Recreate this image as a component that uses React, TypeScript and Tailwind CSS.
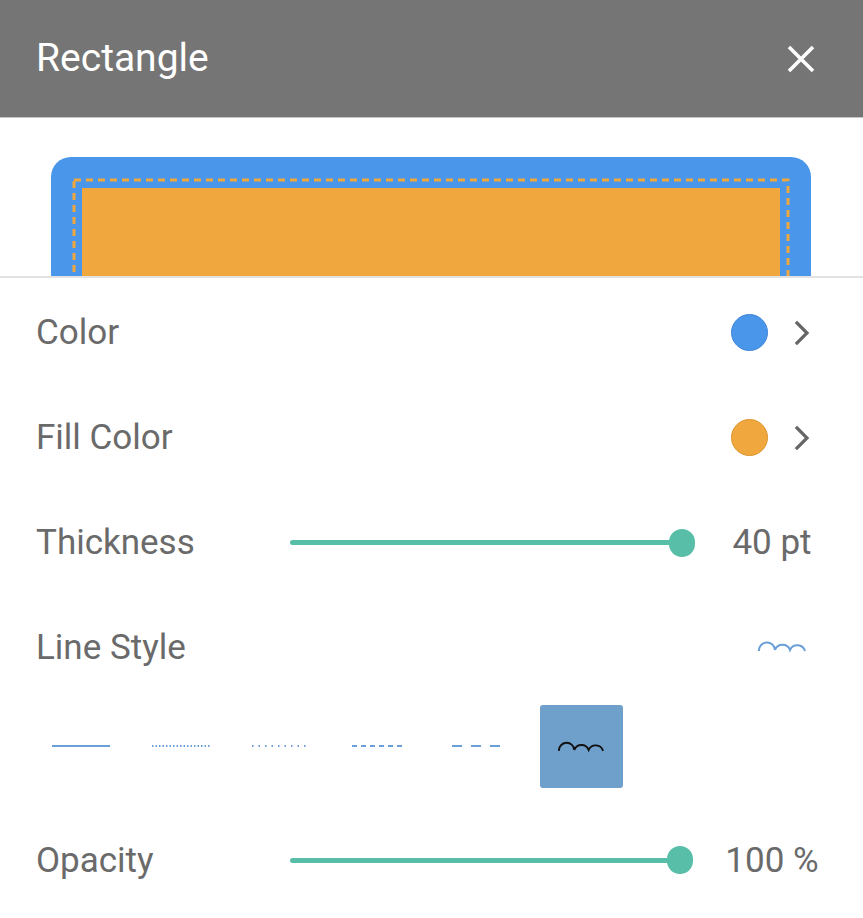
import React from "react";

const teal = "#59bea7";

function Chevron() {
  return (
    <svg width="16" height="26" viewBox="0 0 16 26" fill="none">
      <path d="M3 3l10 10-10 10" stroke="#666666" strokeWidth="3.2" strokeLinecap="square" />
    </svg>
  );
}

function Wave({ color, width = 48 }: { color: string; width?: number }) {
  return (
    <svg width={width} height="14" viewBox="0 0 48 14" fill="none">
      <path
        d="M1 10 A8 8 0 0 1 17 9 A8 8 0 0 1 32 9 A8 8 0 0 1 47 10"
        stroke={color}
        strokeWidth="2"
      />
    </svg>
  );
}

function Slider({ width }: { width: number }) {
  return (
    <div className="relative flex h-[28px] items-center" style={{ width }}>
      <div className="h-[5px] w-full rounded-full" style={{ backgroundColor: teal }} />
      <div
        className="absolute right-[-13px] top-0 h-[28px] w-[26px] rounded-full"
        style={{ backgroundColor: teal }}
      />
    </div>
  );
}

function LineSample({ dash, thick = 2, w = 58 }: { dash?: string; thick?: number; w?: number }) {
  return (
    <svg width={w} height="6" viewBox={`0 0 ${w} 6`}>
      <line x1="0" y1="3" x2={w} y2="3" stroke="#6a9fd8" strokeWidth={thick} strokeDasharray={dash} />
    </svg>
  );
}

export default function App() {
  const label = "text-[35px] text-[#6a6a6a] leading-none";

  return (
    <div
      className="h-[918px] w-[863px] overflow-hidden bg-white"
      style={{ fontFamily: "Roboto, 'Noto Sans', sans-serif" }}
    >
      {/* header */}
      <div className="flex h-[118px] items-center justify-between border-b border-[#c4c4c4] bg-[#757575] pl-9 pr-[48px]">
        <span className="text-[39px] leading-none text-white">Rectangle</span>
        <svg width="28" height="28" viewBox="0 0 28 28">
          <path d="M2 2l24 24M26 2L2 26" stroke="white" strokeWidth="3.6" />
        </svg>
      </div>

      {/* preview */}
      <div className="h-[158px] overflow-hidden">
        <svg width="863" height="158" viewBox="0 0 863 158">
          <rect x="51" y="39" width="760" height="220" rx="20" fill="#4a96ea" />
          <rect
            x="74"
            y="62"
            width="714"
            height="220"
            fill="none"
            stroke="#f0a73d"
            strokeWidth="3"
            strokeDasharray="7 5"
          />
          <rect x="82" y="70" width="698" height="220" fill="#f0a73d" />
        </svg>
      </div>
      <div className="h-[2px] bg-[#e2e2e2]" />

      <div className="pt-[2px]">
        {/* Color */}
        <div className="flex h-[105px] items-center justify-between pl-9 pr-[53px]">
          <span className={label}>Color</span>
          <div className="flex items-center gap-[26px]">
            <div className="h-[37px] w-[37px] rounded-full border border-[#3f86d8] bg-[#4a96ea]" />
            <Chevron />
          </div>
        </div>

        {/* Fill Color */}
        <div className="flex h-[105px] items-center justify-between pl-9 pr-[53px]">
          <span className={label}>Fill Color</span>
          <div className="flex items-center gap-[26px]">
            <div className="h-[37px] w-[37px] rounded-full border border-[#dc9530] bg-[#f0a73d]" />
            <Chevron />
          </div>
        </div>

        {/* Thickness */}
        <div className="flex h-[105px] items-center pl-9">
          <span className={`${label} w-[254px]`}>Thickness</span>
          <Slider width={392} />
          <span className={`${label} ml-[40px] w-[100px] text-center`}>40 pt</span>
        </div>

        {/* Line Style */}
        <div className="flex h-[105px] items-center justify-between pl-9 pr-[57px]">
          <span className={label}>Line Style</span>
          <Wave color="#6a9fd8" />
        </div>

        {/* line style options */}
        <div className="flex h-[92px] items-center pl-[31px]">
          <div className="flex w-[100px] pl-[21px]">
            <LineSample />
          </div>
          <div className="flex w-[100px] pl-[21px]">
            <LineSample dash="1.5 2" />
          </div>
          <div className="flex w-[100px] pl-[21px]">
            <LineSample dash="1.5 5" w={54} />
          </div>
          <div className="flex w-[100px] pl-[21px]">
            <LineSample dash="5 4" w={54} />
          </div>
          <div className="flex w-[100px] pl-[21px]">
            <LineSample dash="10 9" w={48} />
          </div>
          <div className="flex w-[100px] justify-center">
            <div className="flex h-[83px] w-[83px] items-center justify-center rounded-[3px] bg-[#6fa0cc] pt-[4px]">
              <Wave color="#111111" width={46} />
            </div>
          </div>
        </div>

        {/* Opacity */}
        <div className="mt-[16px] flex h-[104px] items-center pl-9">
          <span className={`${label} w-[254px]`}>Opacity</span>
          <Slider width={390} />
          <span className={`${label} ml-[42px] w-[100px] text-center`}>100 %</span>
        </div>
      </div>
    </div>
  );
}
